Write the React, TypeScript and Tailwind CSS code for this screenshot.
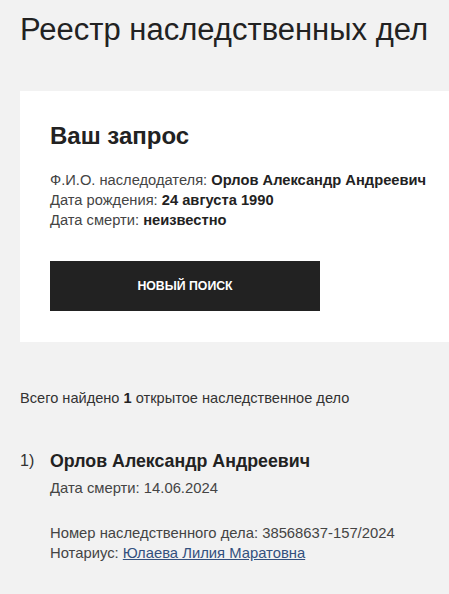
import React from "react";

export default function App() {
  return (
    <div
      className="min-h-[594px] w-full bg-[#f2f2f2] text-[#333]"
      style={{ fontFamily: '"Liberation Sans", Arial, sans-serif' }}
    >
      <div className="pl-5 pt-[12px]">
        <h1 className="text-[31px] leading-[36px] font-normal text-[#222]">
          Реестр наследственных дел
        </h1>
        <div className="mt-[43px] bg-white pl-[30px] pt-[31px] pb-[31px]">
          <h2 className="text-[24px] leading-[28px] font-bold text-[#222]">
            Ваш запрос
          </h2>
          <div className="mt-[20px] text-[14.7px] leading-[20px] font-light text-[#444]">
            <div>
              Ф.И.О. наследодателя:{" "}
              <span className="font-bold text-[#222]">Орлов Александр Андреевич</span>
            </div>
            <div>
              Дата рождения: <span className="font-bold text-[#222]">24 августа 1990</span>
            </div>
            <div>
              Дата смерти: <span className="font-bold text-[#222]">неизвестно</span>
            </div>
          </div>
          <button className="mt-[31px] flex h-[50px] w-[270px] items-center justify-center bg-[#222] text-[12.3px] font-bold text-white">
            НОВЫЙ ПОИСК
          </button>
        </div>
        <p className="mt-[46px] text-[14.6px] leading-[20px] text-[#333]">
          Всего найдено <span className="font-bold text-[#222]">1</span> открытое наследственное дело
        </p>
        <div className="mt-[41px] flex">
          <div className="w-[30px] text-[16px] leading-[24px] text-[#333]">1)</div>
          <div>
            <div className="text-[17.8px] leading-[24px] font-bold text-[#222]">
              Орлов Александр Андреевич
            </div>
            <div className="mt-[5px] text-[14.8px] leading-[20px] text-[#444]">
              Дата смерти: 14.06.2024
            </div>
            <div className="mt-[25px] text-[14.8px] leading-[20px] text-[#444]">
              <div>Номер наследственного дела: 38568637-157/2024</div>
              <div>
                Нотариус:{" "}
                <a href="#" className="text-[#33507e] underline">
                  Юлаева Лилия Маратовна
                </a>
              </div>
            </div>
          </div>
        </div>
      </div>
    </div>
  );
}
